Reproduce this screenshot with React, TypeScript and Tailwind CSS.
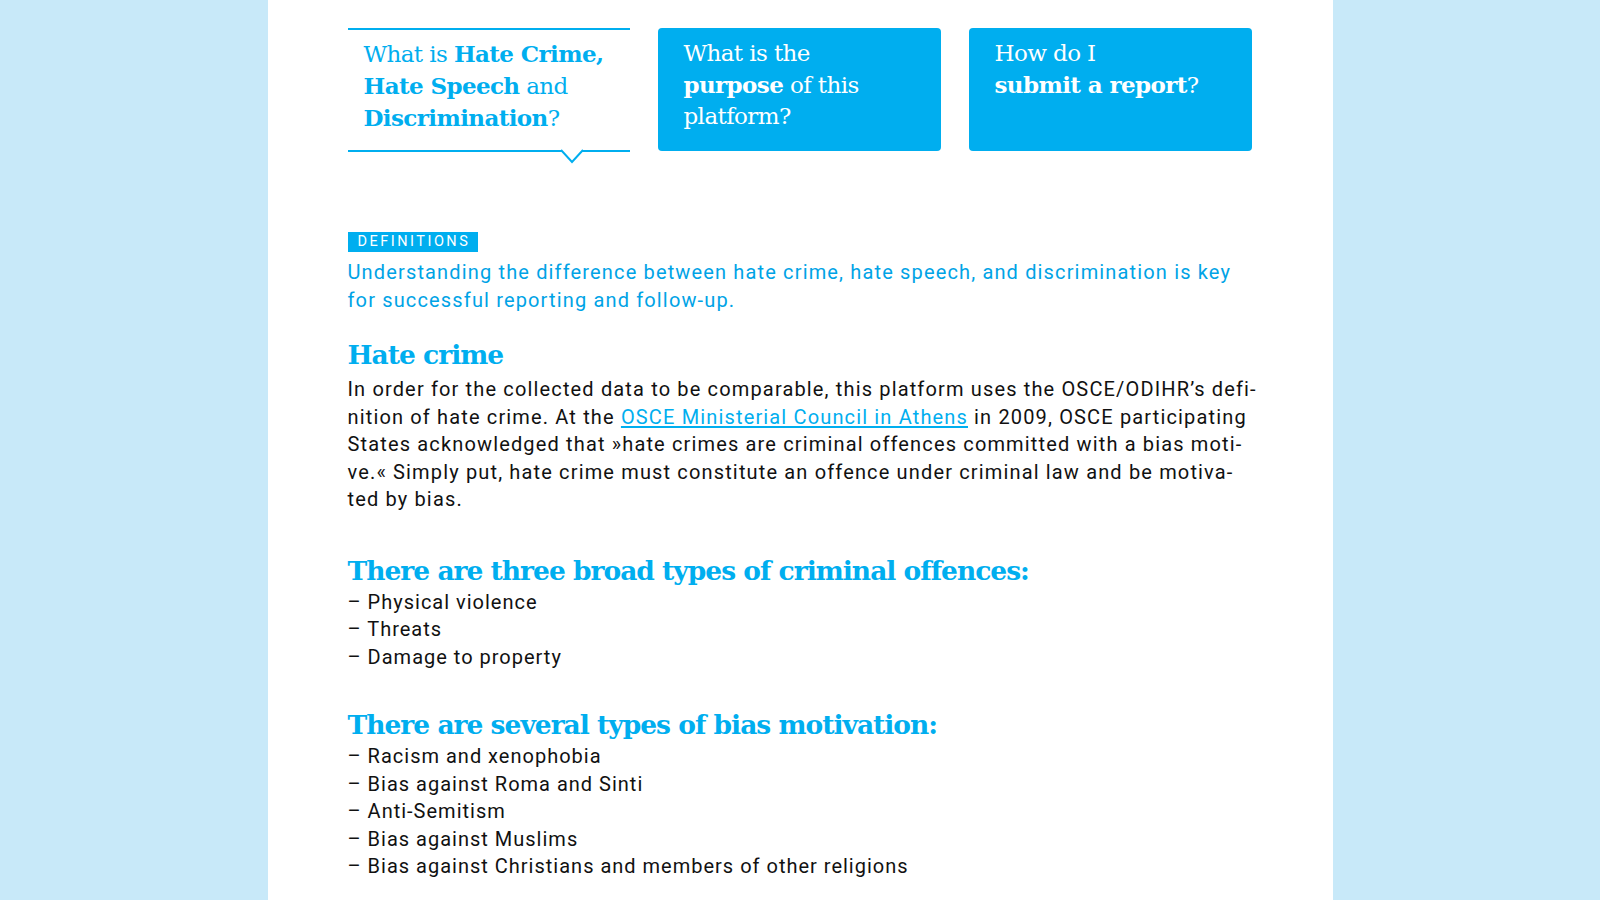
const slab = "font-['DejaVu_Serif',serif]";
const sans = "font-['Roboto',sans-serif]";

function Tab({ children, active }: { children: React.ReactNode; active?: boolean }) {
  if (active) {
    return (
      <div className="relative w-[282px] h-[124px] border-y-2 border-[#00aeef] pl-[16px] pt-[8px] text-[#00aeef]">
        <p className={`${slab} text-[23px] leading-[31px] tracking-[-0.6px]`}>{children}</p>
        <svg className="absolute left-[213px] bottom-[-14px]" width="22" height="15" viewBox="0 0 22 15">
          <rect x="1" y="0" width="20" height="3" fill="white" />
          <polyline points="0,1 11,13 22,1" fill="none" stroke="#00aeef" strokeWidth="2" />
        </svg>
      </div>
    );
  }
  return (
    <div className="w-[283px] h-[123px] rounded-[4px] bg-[#00aeef] pl-[26px] pt-[10px] text-white">
      <p className={`${slab} text-[23px] leading-[31px] tracking-[-0.6px]`}>{children}</p>
    </div>
  );
}

function Dash({ items }: { items: string[] }) {
  return (
    <ul className="text-[20px] leading-[27.5px] tracking-[1px] text-[#111]">
      {items.map((t) => (
        <li key={t}>– {t}</li>
      ))}
    </ul>
  );
}

const heading = `${slab} text-[26.5px] leading-[34px] font-bold text-[#00aeef] tracking-[-1px]`;

export default function App() {
  return (
    <div className="min-h-screen bg-[#c8e9f9] flex justify-center">
      <main className={`${sans} w-[1065px] bg-white pl-[80px] pr-[50px] pt-[28px] pb-[30px]`}>
        <div className="flex gap-[28px]">
          <Tab active>
            What is <b>Hate Crime,</b>
            <br />
            <b>Hate Speech</b> and
            <br />
            <b>Discrimination</b>?
          </Tab>
          <Tab>
            What is the
            <br />
            <b>purpose</b> of this
            <br />
            platform?
          </Tab>
          <Tab>
            How do I
            <br />
            <b>submit a report</b>?
          </Tab>
        </div>

        <div className="mt-[77px]">
          <span className="inline-block bg-[#00aeef] text-white text-[14.5px] leading-[20px] tracking-[2.5px] pl-[10px] pr-[8px]">
            DEFINITIONS
          </span>
          <p className="mt-[5px] text-[20px] leading-[28px] tracking-[1.15px] text-[#00a3e6]">
            Understanding the difference between hate crime, hate speech, and discrimination is key
            <br />
            for successful reporting and follow-up.
          </p>
        </div>

        <h2 className={`${heading} mt-[24px] mb-[4px]`}>Hate crime</h2>
        <p className="text-[20px] leading-[27.5px] tracking-[1.15px] text-[#111]">
          In order for the collected data to be comparable, this platform uses the OSCE/ODIHR’s defi-
          <br />
          nition of hate crime. At the{" "}
          <a href="#" className="text-[#00aeef] underline underline-offset-2">
            OSCE Ministerial Council in Athens
          </a>{" "}
          in 2009, OSCE participating
          <br />
          States acknowledged that »hate crimes are criminal offences committed with a bias moti-
          <br />
          ve.« Simply put, hate crime must constitute an offence under criminal law and be motiva-
          <br />
          ted by bias.
        </p>

        <h2 className={`${heading} mt-[40px] mb-[1px]`}>There are three broad types of criminal offences:</h2>
        <Dash items={["Physical violence", "Threats", "Damage to property"]} />

        <h2 className={`${heading} mt-[37px] mb-[1px]`}>There are several types of bias motivation:</h2>
        <Dash
          items={[
            "Racism and xenophobia",
            "Bias against Roma and Sinti",
            "Anti-Semitism",
            "Bias against Muslims",
            "Bias against Christians and members of other religions",
          ]}
        />
      </main>
    </div>
  );
}
